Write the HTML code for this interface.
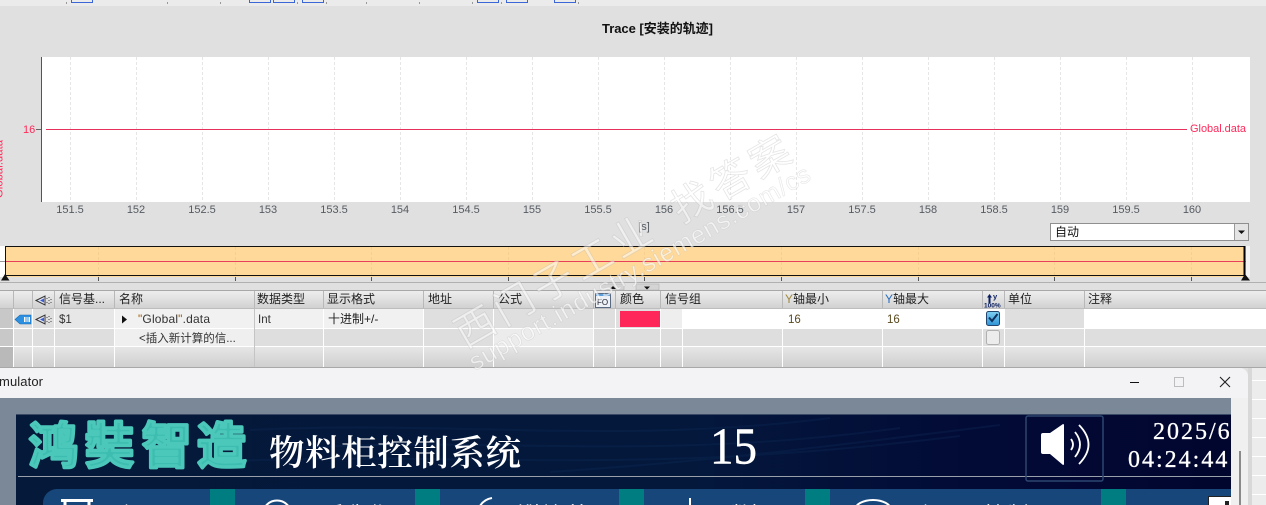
<!DOCTYPE html>
<html><head><meta charset="utf-8"><style>
html,body{margin:0;padding:0;width:1266px;height:505px;overflow:hidden;background:#e0e0e0}
svg{display:block}
text{font-family:"Liberation Sans","Noto Sans CJK SC",sans-serif}
.t{font-size:11px;fill:#555b62;text-anchor:middle}
.h{font-size:12px;fill:#222}
.c{font-size:11.500px;fill:#333}
.s{font-family:"Noto Serif CJK SC","Liberation Serif",serif}
.n{font-size:22px;fill:#fff;font-family:"Noto Sans CJK SC",sans-serif}
</style></head><body>
<svg width="1266" height="505" viewBox="0 0 1266 505" xmlns="http://www.w3.org/2000/svg">
<defs>
<linearGradient id="hd" x1="0" y1="0" x2="0" y2="1"><stop offset="0" stop-color="#efefef"/><stop offset=".45" stop-color="#e2e2e2"/><stop offset="1" stop-color="#cfcfcf"/></linearGradient>
<linearGradient id="r3" x1="0" y1="0" x2="0" y2="1"><stop offset="0" stop-color="#e6e6e6"/><stop offset="1" stop-color="#cfcfcf"/></linearGradient>
<linearGradient id="dk" x1="0" y1="0" x2="1" y2="0"><stop offset="0" stop-color="#05193a"/><stop offset=".55" stop-color="#04183c"/><stop offset=".8" stop-color="#020a36"/><stop offset="1" stop-color="#01062e"/></linearGradient>
<linearGradient id="cb" x1="0" y1="0" x2="0" y2="1"><stop offset="0" stop-color="#7fd0f2"/><stop offset="1" stop-color="#2f94d6"/></linearGradient>
<clipPath id="rot"><rect x="0" y="130" width="5" height="75"/></clipPath>
<clipPath id="sim"><rect x="0" y="368" width="1231" height="137"/></clipPath>
<pattern id="gridbg" width="16" height="19" patternUnits="userSpaceOnUse"><rect width="16" height="19" fill="#ececec"/><path d="M0 .5H16" stroke="#fff"/></pattern>
</defs>

<rect width="1266" height="505" fill="#e0e0e0"/>
<rect width="1266" height="6" fill="#ebebeb"/>
<g fill="none" stroke="#3a66d8" stroke-width="1">
<path d="M71.500 -2V2.500H92.500V-2M249.500 -2V2.500H270.500V-2M273.500 -2V2.500H294.500V-2M302.500 -2V2.500H323.500V-2M477.500 -2V2.500H498.500V-2M506.500 -2V2.500H527.500V-2M554.500 -2V2.500H575.500V-2"/>
</g>
<g fill="#999"><rect x="66" y="2" width="1" height="2"/><rect x="167" y="2" width="1" height="2"/><rect x="220" y="2" width="1" height="2"/><rect x="297" y="2" width="1" height="2"/><rect x="326" y="2" width="1" height="2"/><rect x="366" y="2" width="1" height="2"/><rect x="419" y="2" width="1" height="2"/><rect x="472" y="2" width="1" height="2"/><rect x="501" y="2" width="1" height="2"/><rect x="578" y="2" width="1" height="2"/></g>

<text x="602" y="33" font-size="13" font-weight="700" fill="#111" textLength="111">Trace [安装的轨迹]</text>

<!-- plot -->
<rect x="42" y="57" width="1208" height="145" fill="#fff"/>
<g stroke="#e6e6e6" stroke-dasharray="3 2">
<path d="M70.500 57V202M136.500 57V202M202.500 57V202M268.500 57V202M334.500 57V202M400.500 57V202M466.500 57V202M532.500 57V202M598.500 57V202M664.500 57V202M730.500 57V202M796.500 57V202M862.500 57V202M928.500 57V202M994.500 57V202M1060.500 57V202M1126.500 57V202M1192.500 57V202"/>
</g>
<path d="M41.500 57V202" stroke="#555" stroke-width="1"/>
<path d="M36 129.500H41" stroke="#666"/>
<path d="M46 129.500H1187" stroke="#e8305c" stroke-width="1"/>
<text x="23" y="133" font-size="11" fill="#ff2a5a">16</text>
<text x="1190" y="132" font-size="11" fill="#ff2a5a" textLength="56">Global.data</text>
<g clip-path="url(#rot)"><text transform="translate(2.500 198) rotate(-90)" font-size="11" fill="#ff2a5a" textLength="58">Global.data</text></g>

<g class="x">
<text class="t" x="70" y="213">151.5</text><text class="t" x="136" y="213">152</text><text class="t" x="202" y="213">152.5</text><text class="t" x="268" y="213">153</text><text class="t" x="334" y="213">153.5</text><text class="t" x="400" y="213">154</text><text class="t" x="466" y="213">154.5</text><text class="t" x="532" y="213">155</text><text class="t" x="598" y="213">155.5</text><text class="t" x="664" y="213">156</text><text class="t" x="730" y="213">156.5</text><text class="t" x="796" y="213">157</text><text class="t" x="862" y="213">157.5</text><text class="t" x="928" y="213">158</text><text class="t" x="994" y="213">158.5</text><text class="t" x="1060" y="213">159</text><text class="t" x="1126" y="213">159.5</text><text class="t" x="1192" y="213">160</text>
</g>
<text class="t" x="644" y="230">[s]</text>

<!-- select -->
<rect x="1050.500" y="223.500" width="198" height="17" fill="#fff" stroke="#8f8f8f"/>
<rect x="1234" y="224" width="14" height="16" fill="#e4e4e4"/><path d="M1234.500 224V240" stroke="#9a9a9a"/>
<path d="M1238 230.500h7l-3.500 3.500z" fill="#111"/>
<text x="1055" y="236" font-size="12" fill="#111">自动</text>

<!-- overview -->
<rect x="0" y="246" width="5" height="31" fill="#fff"/>
<path d="M0 261.500H5" stroke="#999"/><path d="M1245 261.500H1250" stroke="#999"/>
<rect x="1246" y="246" width="4" height="31" fill="#f4f4f4"/>
<rect x="5" y="246" width="1240" height="31" fill="#ffd999"/>
<g stroke="#f4cf90" stroke-dasharray="3 2">
<path d="M98.500 247V276M235.500 247V276M371.500 247V276M508.500 247V276M644.500 247V276M781.500 247V276M918.500 247V276M1054.500 247V276M1191.500 247V276"/>
</g>
<path d="M5 261.500H1245" stroke="#e8405a"/>
<path d="M5 246.500H1245M5 275.500H1245" stroke="#111"/>
<path d="M5.500 246V276" stroke="#111"/>
<path d="M1244.500 246V276" stroke="#000" stroke-width="2"/>
<path d="M1 280.500 5 274 9.500 280.500zM1241 280.500 1245 274 1250 280.500z" fill="#111"/>
<path d="M98.500 277V281M235.500 277V281M371.500 277V281M508.500 277V281M644.500 277V281M781.500 277V281M918.500 277V281M1054.500 277V281M1191.500 277V281" stroke="#555"/>
<path d="M0 282.500H1266" stroke="#b0b0b0"/>
<rect x="601" y="284" width="23" height="6" fill="#d4d4d4" stroke="#aaa" stroke-width=".5"/>
<rect x="636" y="284" width="23" height="6" fill="#d4d4d4" stroke="#aaa" stroke-width=".5"/>
<path d="M610 289l3-3 3 3zM644 286.500h6l-3 3z" fill="#111"/>

<!-- table backgrounds -->
<rect x="0" y="290" width="1266" height="19" fill="url(#hd)"/>
<path d="M0 290.500H1266" stroke="#a8a8a8"/>
<path d="M0 308.500H1266" stroke="#bdbdbd"/>
<rect x="0" y="309" width="1266" height="19" fill="#dfdfdf"/>
<rect x="0" y="328" width="1266" height="19" fill="#dedede"/>
<rect x="0" y="347" width="1266" height="20" fill="url(#r3)"/>
<rect x="0" y="309" width="13" height="38" fill="#c8c8c8"/>
<rect x="0" y="347" width="13" height="20" fill="#b9b9b9"/>
<rect x="54" y="309" width="60" height="19" fill="#e7e7e7"/>
<rect x="114" y="309" width="309" height="19" fill="#f1f1f1"/>
<rect x="114" y="328" width="140" height="19" fill="#efefef"/>
<rect x="493" y="328" width="100" height="19" fill="#ececec"/>
<rect x="660" y="309" width="22" height="19" fill="#eeeeee"/>
<rect x="682" y="309" width="300" height="19" fill="#fff"/>
<rect x="982" y="309" width="22" height="19" fill="#fff"/>
<rect x="1084" y="309" width="182" height="19" fill="#fff"/>
<rect x="620" y="311" width="40" height="16" fill="#ff2759"/>
<!-- grid lines -->
<g stroke="#fff">
<path d="M0 328.500H1266M0 346.500H1266"/>
<path d="M13.500 309V367M32.500 309V367M54.500 309V367M114.500 309V367M323.500 309V367M423.500 309V367M493.500 309V367M593.500 309V367M615.500 309V367M660.500 309V367M682.500 309V367M782.500 309V367M882.500 309V367M982.500 309V367M1004.500 309V367M1084.500 309V367"/>
</g>
<path d="M254.500 309V367" stroke="#c4c4c4"/>
<g stroke="#b8b8b8">
<path d="M13.500 291V308M32.500 291V308M54.500 291V308M114.500 291V308M254.500 291V308M323.500 291V308M423.500 291V308M493.500 291V308M593.500 291V308M615.500 291V308M660.500 291V308M782.500 291V308M882.500 291V308M982.500 291V308M1004.500 291V308M1084.500 291V308"/>
</g>
<path d="M0 367.500H1266" stroke="#a8a8a8"/>

<!-- header text -->
<text class="h" x="59" y="303">信号基...</text><text class="h" x="119" y="303">名称</text><text class="h" x="257" y="303">数据类型</text><text class="h" x="327" y="303">显示格式</text><text class="h" x="428" y="303">地址</text><text class="h" x="498" y="303">公式</text><text class="h" x="620" y="303">颜色</text><text class="h" x="665" y="303">信号组</text><text class="h" x="785" y="303"><tspan fill="#a08a40">Y</tspan>轴最小</text><text class="h" x="885" y="303"><tspan fill="#2a6fc0">Y</tspan>轴最大</text><text class="h" x="1008" y="303">单位</text><text class="h" x="1088" y="303">注释</text>

<!-- header icons -->
<g>
<path d="M36 300.500 45 296V305z" fill="#dfe2f4" stroke="#333" stroke-width="1"/>
<path d="M40 300.500l4-2v4z" fill="#3a5ed0"/>
<path d="M47 298v1M47 302v1M49 297v1M49 300v1M49 303v1M51 299v1M51 302v1" stroke="#444"/>
<path d="M36 319.500 45 315V324z" fill="#dfe2f4" stroke="#333" stroke-width="1"/>
<path d="M40 319.500l4-2v4z" fill="#3a5ed0"/>
<path d="M47 317v1M47 321v1M49 316v1M49 319v1M49 322v1M51 318v1M51 321v1" stroke="#444"/>
<rect x="595.500" y="293.500" width="15" height="14" fill="#eef1f5" stroke="#5a6a80"/>
<rect x="596" y="294" width="14" height="2" fill="#5aa0e0"/>
<text x="597" y="305" font-size="8" fill="#223">FO</text>
<path d="M987 297.500l2.500-3.500 2.500 3.500h-1.500V303h-2v-5.500z" fill="#0a1f60"/>
<text x="993" y="299" font-size="7.500" font-weight="700" fill="#0a1f60">y</text>
<text x="984" y="307.500" font-size="6.500" font-weight="700" fill="#0a1f60">100%</text>
<path d="M15 319.500 20 315H31V324H20z" fill="#2c8fe0" stroke="#1a6cb5" stroke-width=".6"/>
<rect x="24" y="317" width="6" height="5" fill="#fff"/><path d="M26 317v5M28 317v5" stroke="#2c8fe0"/>
</g>

<!-- row text -->
<text class="c" x="59" y="323" fill="#5a4a30">$1</text>
<path d="M122 315.500l5 4-5 4z" fill="#111"/>
<text x="138" y="323" font-size="12" fill="#333" textLength="72"><tspan fill="#a05a00">"</tspan>Global<tspan fill="#a05a00">"</tspan>.data</text>
<text class="c" x="258" y="323">Int</text>
<text x="328" y="323" font-size="12" fill="#222">十进制+/-</text>
<text x="139" y="342" font-size="11.500" fill="#333">&lt;插入新计算的信...</text>
<text class="c" x="788" y="323" style="fill:#5a4a20">16</text>
<text class="c" x="887" y="323" style="fill:#5a4a20">16</text>

<!-- checkboxes -->
<rect x="986.500" y="311.500" width="13" height="14" rx="2" fill="url(#cb)" stroke="#23466e"/>
<path d="M989 317.500l3 3.500 5.500-7" fill="none" stroke="#10305e" stroke-width="2"/>
<rect x="986.500" y="330.500" width="13" height="14" rx="2" fill="#ececec" stroke="#b0b0b0"/>

<!-- area right of window -->
<rect x="1249" y="368" width="17" height="137" fill="url(#gridbg)"/>
<rect x="1248" y="368" width="4" height="137" fill="#d8d8d8"/>

<!-- window -->
<path d="M0 368H1240a8 8 0 0 1 8 8V505H0z" fill="#f3f2f4"/>
<text x="-1" y="386" font-size="13" fill="#222" textLength="44">mulator</text>
<path d="M1130 382.500H1139" stroke="#111"/>
<rect x="1174.500" y="377.500" width="9" height="9" fill="none" stroke="#bdbdbd"/>
<path d="M1220 377 1230 387M1230 377 1220 387" stroke="#222" stroke-width="1.100"/>
<rect x="0" y="398" width="1231" height="107" fill="#7a8898"/>
<rect x="1231" y="398" width="17" height="107" fill="#f0f0f0"/>
<rect x="1239" y="451" width="2" height="54" fill="#8a8a8a"/>

<!-- hmi -->
<rect x="16" y="414" width="1215" height="91" fill="url(#dk)"/>
<path d="M16 414.500H1231" stroke="#3a4a66"/>
<g fill="none" stroke="#0e2c55" stroke-width="2" opacity=".35">
<path d="M250 430C450 420 620 445 830 418M300 448C500 436 650 462 900 428M200 462C480 450 620 478 960 436M550 472C700 462 800 450 1000 425"/>
</g>
<path d="M18 476.500H1231" stroke="#9aa0aa"/>
<path d="M43 505V503a14 14 0 0 1 14-14H1231V505z" fill="#17477a"/>
<g fill="#007d80"><rect x="210" y="489" width="25" height="16"/><rect x="415" y="489" width="25" height="16"/><rect x="619" y="489" width="25" height="16"/><rect x="805" y="489" width="25" height="16"/><rect x="1101" y="489" width="25" height="16"/></g>

<g font-size="49" font-weight="700" fill="#3dbdb0" stroke="#4cc8ba" stroke-width="3.500" stroke-linejoin="round">
<text x="29" y="463" style="font-family:'Noto Sans CJK SC',sans-serif">鸿</text>
<text x="85" y="463" style="font-family:'Noto Sans CJK SC',sans-serif">奘</text>
<text x="142" y="463" style="font-family:'Noto Sans CJK SC',sans-serif">智</text>
<text x="197" y="463" style="font-family:'Noto Sans CJK SC',sans-serif">造</text>
</g>
<text class="s" x="269" y="465" font-size="35.500" font-weight="600" fill="#fff" textLength="252">物料柜控制系统</text>
<text x="710" y="463.500" font-size="52" style="font-family:'Liberation Serif',serif" fill="#fff" stroke="#fff" stroke-width=".5" textLength="47" lengthAdjust="spacingAndGlyphs">15</text>

<rect x="1026" y="416" width="77" height="65" rx="2" fill="none" stroke="#2c456f" stroke-width="1.500"/>
<path d="M1043 433H1050L1063 424Q1064 424 1064 425V464Q1064 465 1063 465L1050 454H1043Q1041 454 1041 452V435Q1041 433 1043 433z" fill="#fff"/>
<g fill="none" stroke="#fff" stroke-width="1.800">
<path d="M1071 439Q1075 444.500 1071 450"/>
<path d="M1075 432Q1085 444.500 1075 457"/>
<path d="M1079 425Q1098 444.500 1079 464"/>
</g>
<g clip-path="url(#sim)">
<text x="1153" y="439" font-size="24" style="font-family:'Liberation Serif',serif" fill="#fff" stroke="#fff" stroke-width=".3" letter-spacing="2">2025/6</text>
<text x="1128" y="467" font-size="24" style="font-family:'Liberation Serif',serif" fill="#fff" stroke="#fff" stroke-width=".3" letter-spacing="2">04:24:44</text>
<!-- nav -->
<rect x="61" y="499" width="32" height="3" fill="#fff"/><path d="M65 502V510M89 502V510" stroke="#fff" stroke-width="3"/>
<text class="n" x="117" y="523" textLength="59">主画面</text>
<ellipse cx="277" cy="514" rx="14" ry="13.500" fill="none" stroke="#fff" stroke-width="2"/>
<text class="n" x="323" y="523" textLength="67">手动操作</text>
<path d="M492 498C486 499 481 502 478 510" fill="none" stroke="#fff" stroke-width="2"/>
<text class="n" x="515" y="523" textLength="73">维护保养</text>
<rect x="689" y="498" width="2" height="8" fill="#fff"/>
<text class="n" x="730" y="523" textLength="42">数据</text>
<ellipse cx="873" cy="510" rx="18" ry="10" fill="none" stroke="#fff" stroke-width="2"/>
<text class="n" x="916" y="523" textLength="158">主画面控制界面</text>
<rect x="1208.500" y="496.500" width="24" height="14" fill="#fff" stroke="#222" stroke-width="1"/>
<rect x="1225" y="501" width="4" height="5" fill="#222"/>
</g>

<!-- watermark -->
<g fill="#ffffff" fill-opacity=".5" stroke="#a8a8a8" stroke-opacity=".3" stroke-width=".8" transform="translate(465 349) rotate(-30)">
<text x="0" y="0" font-size="40" letter-spacing="5" style="font-family:'Noto Sans CJK SC',sans-serif" font-weight="400">西门子工业</text>
<text x="250" y="0" font-size="40" letter-spacing="5" style="font-family:'Noto Sans CJK SC',sans-serif" font-weight="400">找答案</text>
</g>
<g fill="#ffffff" fill-opacity=".62" stroke="#a8a8a8" stroke-opacity=".3" stroke-width=".6" transform="translate(475 371) rotate(-29.600)">
<text x="0" y="0" font-size="25" textLength="388">support.industry.siemens.com/cs</text>
</g>
</svg>
</body></html>
